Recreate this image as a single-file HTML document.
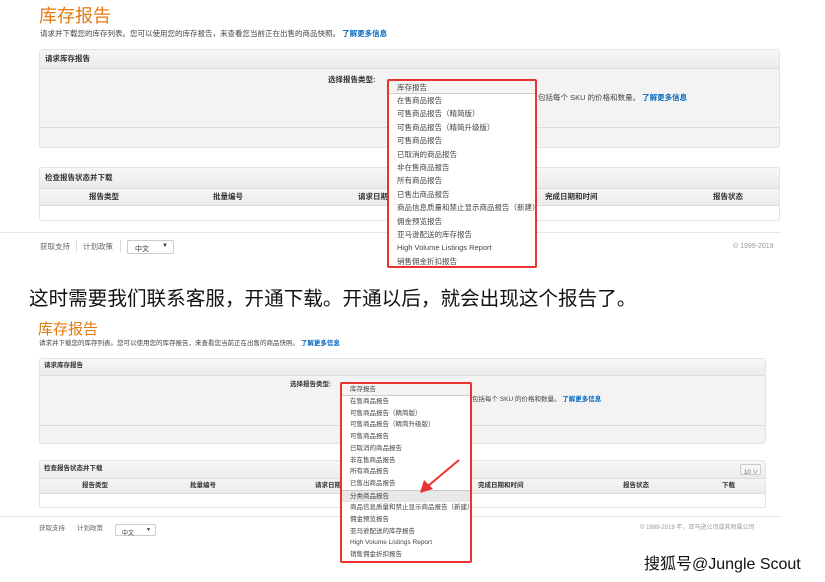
<!DOCTYPE html>
<html><head><meta charset="utf-8"><style>
*{margin:0;padding:0;box-sizing:border-box}
body{width:825px;height:582px;background:#fff;position:relative;overflow:hidden;font-family:"Liberation Sans","Noto Sans CJK SC",sans-serif;color:#333}
.a{position:absolute;white-space:nowrap;line-height:1}
.panel{position:absolute;background:#f3f3f3;border:1px solid #e4e4e4;border-radius:3px}
.hd{position:absolute;left:0;right:0;top:0;background:linear-gradient(#f7f7f7,#ebebeb);border-bottom:1px solid #ddd}
.b{font-weight:bold;color:#333}
.link{color:#0066c0}
.dd{position:absolute;border:2px solid #e8332f;background:#fff;border-radius:2px}
.dd div{white-space:nowrap;padding-left:8px;color:#444}
</style></head><body>

<!-- TOP SCREENSHOT -->
<div class="a" style="left:39px;top:7px;font-size:18px;color:#e47911">库存报告</div>
<div class="a" style="left:40px;top:30px;font-size:7.5px;color:#444">请求并下载您的库存列表。您可以使用您的库存报告，来查看您当前正在出售的商品快照。 <span class="link b">了解更多信息</span></div>

<div class="panel" style="left:39px;top:49px;width:741px;height:99px">
 <div class="hd" style="height:19px"></div>
 <div style="position:absolute;left:0;right:0;top:77px;height:1px;background:#ddd"></div>
</div>
<div class="a b" style="left:45px;top:55px;font-size:7.5px">请求库存报告</div>
<div class="a b" style="left:328px;top:76px;font-size:7.5px">选择报告类型:</div>
<div class="a" style="left:538px;top:94px;font-size:7.5px;color:#444">包括每个 SKU 的价格和数量。 <span class="link b">了解更多信息</span></div>

<div class="panel" style="left:39px;top:167px;width:741px;height:54px;background:#fff">
 <div class="hd" style="height:21px"></div>
 <div style="position:absolute;left:0;right:0;top:21px;height:17px;background:linear-gradient(#f5f5f5,#ececec);border-bottom:1px solid #ddd"></div>
</div>
<div class="a b" style="left:45px;top:174px;font-size:7.5px">检查报告状态并下载</div>
<div class="a b" style="left:89px;top:193px;font-size:7.5px">报告类型</div>
<div class="a b" style="left:213px;top:193px;font-size:7.5px">批量编号</div>
<div class="a b" style="left:358px;top:193px;font-size:7.5px">请求日期</div>
<div class="a b" style="left:545px;top:193px;font-size:7.5px">完成日期和时间</div>
<div class="a b" style="left:713px;top:193px;font-size:7.5px">报告状态</div>

<div style="position:absolute;left:0;width:781px;top:232px;height:1px;background:#e6e6e6"></div>
<div class="a" style="left:40px;top:243px;font-size:7.5px;color:#666">获取支持</div>
<div style="position:absolute;left:76px;top:240px;width:1px;height:12px;background:#ddd"></div>
<div class="a" style="left:83px;top:243px;font-size:7.5px;color:#666">计划政策</div>
<div style="position:absolute;left:120px;top:240px;width:1px;height:12px;background:#ddd"></div>
<div style="position:absolute;left:127px;top:240px;width:47px;height:14px;border:1px solid #ccc;border-radius:2px;font-size:7px;padding:3px 0 0 7px">中文<span style="position:absolute;right:5px;top:2px;font-size:6px">▼</span></div>
<div class="a" style="left:733px;top:243px;font-size:7px;color:#999">© 1999-2019</div>

<div class="dd" style="left:387px;top:79px;width:150px;height:189px;font-size:7.5px;line-height:13.4px;padding-top:0">
 <div style="border-bottom:1px solid #ccc;background:#f4f4f4;line-height:11px;padding-top:1px">库存报告</div>
 <div>在售商品报告</div><div>可售商品报告（精简版）</div><div>可售商品报告（精简升级版）</div><div>可售商品报告</div><div>已取消的商品报告</div><div>非在售商品报告</div><div>所有商品报告</div><div>已售出商品报告</div><div>商品信息质量和禁止显示商品报告（新建）</div><div>佣金预览报告</div><div>亚马逊配送的库存报告</div><div>High Volume Listings Report</div><div>销售佣金折扣报告</div>
</div>

<div class="a" style="left:29px;top:290px;font-size:19.6px;color:#111">这时需要我们联系客服，开通下载。开通以后，就会出现这个报告了。</div>

<!-- BOTTOM SCREENSHOT -->
<div class="a" style="left:38px;top:322px;font-size:15px;color:#e47911">库存报告</div>
<div class="a" style="left:39px;top:341px;font-size:6.5px;color:#444">请求并下载您的库存列表。您可以使用您的库存报告，来查看您当前正在出售的商品快照。 <span class="link b">了解更多信息</span></div>

<div class="panel" style="left:39px;top:358px;width:727px;height:86px">
 <div class="hd" style="height:17px"></div>
 <div style="position:absolute;left:0;right:0;top:66px;height:1px;background:#ddd"></div>
</div>
<div class="a b" style="left:44px;top:363px;font-size:6.5px">请求库存报告</div>
<div class="a b" style="left:290px;top:382px;font-size:6.5px">选择报告类型:</div>
<div class="a" style="left:472px;top:397px;font-size:6.5px;color:#444">包括每个 SKU 的价格和数量。 <span class="link b">了解更多信息</span></div>

<div class="panel" style="left:39px;top:460px;width:727px;height:48px;background:#fff">
 <div class="hd" style="height:18px"></div>
 <div style="position:absolute;left:0;right:0;top:18px;height:15px;background:linear-gradient(#f5f5f5,#ececec);border-bottom:1px solid #ddd"></div>
</div>
<div class="a b" style="left:44px;top:466px;font-size:6.5px">检查报告状态并下载</div>
<div style="position:absolute;left:740px;top:464px;width:21px;height:11px;border:1px solid #ccc;border-radius:2px;font-size:6px;padding:2px 0 0 3px;background:#f6f6f6;color:#666">10 ∨</div>
<div class="a b" style="left:82px;top:483px;font-size:6.5px">报告类型</div>
<div class="a b" style="left:190px;top:483px;font-size:6.5px">批量编号</div>
<div class="a b" style="left:315px;top:483px;font-size:6.5px">请求日期</div>
<div class="a b" style="left:478px;top:483px;font-size:6.5px">完成日期和时间</div>
<div class="a b" style="left:623px;top:483px;font-size:6.5px">报告状态</div>
<div class="a b" style="left:722px;top:483px;font-size:6.5px">下载</div>

<div style="position:absolute;left:0;width:780px;top:516px;height:1px;background:#e6e6e6"></div>
<div class="a" style="left:39px;top:526px;font-size:6.5px;color:#666">获取支持</div>
<div class="a" style="left:77px;top:526px;font-size:6.5px;color:#666">计划政策</div>
<div style="position:absolute;left:115px;top:524px;width:41px;height:12px;border:1px solid #ccc;border-radius:2px;font-size:6px;padding:3px 0 0 6px">中文<span style="position:absolute;right:4px;top:2px;font-size:5px">▼</span></div>
<div class="a" style="left:640px;top:525px;font-size:6px;color:#999">© 1999-2019 年，亚马逊公司或其附属公司</div>

<div class="dd" style="left:340px;top:382px;width:132px;height:181px;font-size:6.5px;line-height:11.7px">
 <div style="border-bottom:1px solid #ccc;background:#f4f4f4;line-height:10px;padding-top:1px">库存报告</div>
 <div>在售商品报告</div><div>可售商品报告（精简版）</div><div>可售商品报告（精简升级版）</div><div>可售商品报告</div><div>已取消的商品报告</div><div>非在售商品报告</div><div>所有商品报告</div><div>已售出商品报告</div><div style="background:#e8e8e8;border-top:1px solid #ccc">分类商品报告</div><div>商品信息质量和禁止显示商品报告（新建）</div><div>佣金预览报告</div><div>亚马逊配送的库存报告</div><div>High Volume Listings Report</div><div>销售佣金折扣报告</div>
</div>

<svg style="position:absolute;left:0;top:0" width="825" height="582">
 <line x1="459" y1="460" x2="428" y2="486" stroke="#e8332f" stroke-width="2"/>
 <polygon points="420,493 424,480 433,489" fill="#e8332f"/>
</svg>

<div class="a" style="left:644px;top:557px;font-size:16px;color:#111;text-shadow:0 0 2px #fff">搜狐号@Jungle Scout</div>
</body></html>
